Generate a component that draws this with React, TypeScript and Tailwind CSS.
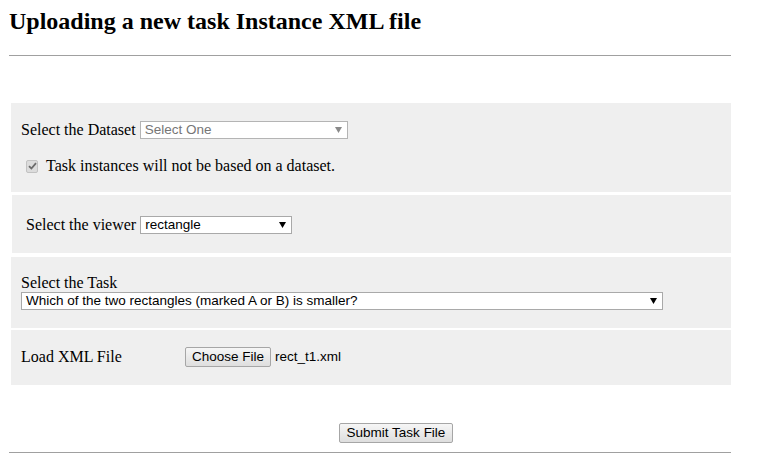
import React from "react";

const serif = "font-['Liberation_Serif',serif]";
const sans = "font-['Liberation_Sans',Arial,sans-serif]";

function FakeSelect({
  value,
  width,
  disabled,
}: {
  value: string;
  width: string;
  disabled?: boolean;
}) {
  return (
    <div
      className={`${sans} ${width} h-[18px] flex items-center justify-between bg-white border ${
        disabled ? "border-[#b4b4b4] text-[#767676]" : "border-[#a9a9a9] text-black"
      } text-[13.5px] pl-[4px] pr-[5px] leading-none`}
    >
      <span>{value}</span>
      <svg width="7" height="6" viewBox="0 0 7 6">
        <path d="M0 0 H7 L3.5 6 Z" fill={disabled ? "#8a8a8a" : "#000"} />
      </svg>
    </div>
  );
}

function Button({ label, width }: { label: string; width: string }) {
  return (
    <div
      className={`${sans} ${width} h-[20px] flex items-center justify-center text-[13.5px] text-black border border-[#a6a6a6] rounded-[2px] bg-gradient-to-b from-[#f6f6f6] to-[#dedede] leading-none`}
    >
      {label}
    </div>
  );
}

export default function App() {
  return (
    <div className={`${serif} bg-white text-black w-[760px] h-[468px] px-[9px]`}>
      <h2 className="text-[24px] font-bold leading-[28px] pt-[7px] h-[55px]">
        Uploading a new task Instance XML file
      </h2>
      <div className="w-[722px] border-t border-[#a0a0a0]" />

      <div className="ml-[2px] mt-[47px] w-[720px] flex flex-col">
        {/* Panel 1 */}
        <div className="h-[89px] bg-[#efefef] pl-[10px] pt-[18px] text-[16px]">
          <div className="flex items-center h-[18px]">
            <span className="mr-[4px] leading-[18px]">Select the Dataset</span>
            <FakeSelect value="Select One" width="w-[208px]" disabled />
          </div>
          <div className="flex items-center h-[16px] mt-[19px]">
            <div className="ml-[5px] w-[12px] h-[13px] flex items-center justify-center border border-[#c2c2c2] rounded-[2px] bg-[#dcdcdc]">
              <svg width="9" height="8" viewBox="0 0 9 8">
                <path d="M1 4.2 L3.4 6.5 L8 1.2" stroke="#6b6b6b" strokeWidth="1.8" fill="none" />
              </svg>
            </div>
            <span className="ml-[8px] leading-[18px]">
              Task instances will not be based on a dataset.
            </span>
          </div>
        </div>

        {/* Panel 2 */}
        <div className="h-[58px] mt-[3px] ml-[1px] bg-[#efefef] pl-[14px] pt-[21px] text-[16px]">
          <div className="flex items-center h-[18px]">
            <span className="mr-[4px] leading-[18px]">Select the viewer</span>
            <FakeSelect value="rectangle" width="w-[152px]" />
          </div>
        </div>

        {/* Panel 3 */}
        <div className="h-[71px] mt-[4px] bg-[#efefef] pl-[10px] pt-[17px] text-[16px]">
          <div className="leading-[18px]">Select the Task</div>
          <div>
            <FakeSelect
              value="Which of the two rectangles (marked A or B) is smaller?"
              width="w-[642px]"
            />
          </div>
        </div>

        {/* Panel 4 */}
        <div className="h-[55px] mt-[2px] bg-[#efefef] pl-[10px] pt-[17px] text-[16px]">
          <div className="flex items-center h-[20px]">
            <span className="w-[164px] leading-[18px]">Load XML File</span>
            <Button label="Choose File" width="w-[86px]" />
            <span className={`${sans} text-[13.5px] ml-[4px]`}>rect_t1.xml</span>
          </div>
        </div>
      </div>

      <div className="mt-[38px] ml-[330px]">
        <Button label="Submit Task File" width="w-[114px]" />
      </div>
      <div className="mt-[9px] w-[722px] border-t border-[#a0a0a0]" />
    </div>
  );
}
